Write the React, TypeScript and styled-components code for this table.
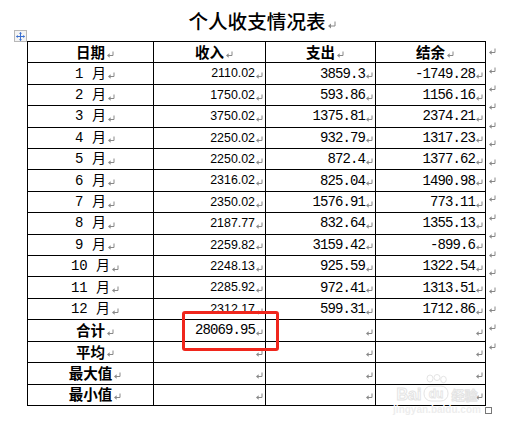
import React from "react";
import styled, { createGlobalStyle } from "styled-components";

const Global = createGlobalStyle`
  html, body { margin: 0; padding: 0; background: #fff; }
  body { font-family: "Noto Sans CJK SC", "Liberation Sans", sans-serif; color: #000; }
`;

const Page = styled.div`
  position: relative;
  width: 509px;
  height: 428px;
  background: #fff;
  overflow: hidden;
`;

const TitleBar = styled.div`
  display: flex;
  justify-content: center;
  padding: 9px 0 0 5px;
  height: 24px;
  margin-bottom: 8px;
`;

const Title = styled.h1`
  margin: 0;
  font-family: "Noto Sans CJK SC", sans-serif;
  font-weight: 500;
  font-size: 19.6px;
  line-height: 24px;
  display: flex;
  align-items: center;
`;

const TableRow = styled.div`
  display: flex;
  margin-left: 27px;
`;

const Grid = styled.div`
  display: grid;
  grid-template-columns: 126px 112px 110px 110px;
  grid-auto-rows: 21.41px;
  border-top: 1px solid #000;
  border-left: 1px solid #000;
`;

type Align = "center" | "right";

const Cell = styled.div<{ $align: Align }>`
  box-sizing: border-box;
  border-right: 1px solid #000;
  border-bottom: 1px solid #000;
  display: flex;
  align-items: center;
  justify-content: ${(p) => (p.$align === "center" ? "center" : "flex-end")};
  padding-right: ${(p) => (p.$align === "center" ? "0" : "2px")};
  overflow: hidden;
  white-space: nowrap;
`;

const HeadText = styled.span`
  font-family: "Noto Sans CJK SC", sans-serif;
  font-weight: 700;
  font-size: 14.5px;
  line-height: 1;
`;

const MonthText = styled.span`
  font-family: "Liberation Mono", "Noto Sans CJK SC", monospace;
  font-size: 14px;
  line-height: 1;
`;

const SansNum = styled.span`
  font-family: "Liberation Sans", sans-serif;
  font-size: 12.4px;
  line-height: 1;
`;

const MonoNum = styled.span`
  font-family: "Liberation Mono", monospace;
  font-size: 14px;
  letter-spacing: -0.9px;
  line-height: 1;
`;

const MarkSvg = styled.svg<{ $hang?: boolean }>`
  flex: none;
  width: 7px;
  height: 7px;
  margin-left: ${(p) => (p.$hang ? "2px" : "1px")};
  margin-right: ${(p) => (p.$hang ? "-9px" : "0")};
  margin-top: 4px;
`;

const Mark = ({ hang }: { hang?: boolean }) => (
  <MarkSvg $hang={hang} viewBox="0 0 7 7">
    <path d="M6 0.5 V4.5 H2" stroke="#888" strokeWidth="1" fill="none" />
    <polygon points="0,4.5 2.6,2.2 2.6,6.8" fill="#888" />
  </MarkSvg>
);

const EndCol = styled.div`
  display: flex;
  flex-direction: column;
  padding-top: 1px;
`;

const EndCell = styled.div`
  height: 21.41px;
  display: flex;
  align-items: center;
  padding-left: 2px;
  margin-top: -3px;
`;

const TitleMark = styled.svg`
  width: 8px;
  height: 8px;
  margin-left: 2px;
  margin-right: -10px;
  margin-top: 8px;
`;

const Handle = styled.div`
  position: absolute;
  left: 14px;
  top: 30px;
  width: 11px;
  height: 10px;
  border: 1px solid #b8b8b8;
  background: #f4f4f4;
  display: flex;
  align-items: center;
  justify-content: center;
`;

const Highlight = styled.div`
  position: absolute;
  left: 182px;
  top: 311px;
  width: 97px;
  height: 40px;
  box-sizing: border-box;
  border: 3px solid #f0261c;
  border-radius: 3px;
`;

const ResizeBox = styled.div`
  position: absolute;
  left: 485px;
  top: 407px;
  width: 5px;
  height: 5px;
  border: 1px solid #777;
  background: #fff;
`;

const Watermark = styled.div`
  position: absolute;
  left: 391px;
  top: 372px;
  width: 92px;
  display: flex;
  flex-direction: column;
  align-items: center;
  pointer-events: none;
`;

const WmLogo = styled.div`
  display: flex;
  align-items: flex-end;
  height: 30px;
`;

const WmWord = styled.span<{ $cjk?: boolean }>`
  font-family: ${(p) => (p.$cjk ? '"Noto Sans CJK SC", sans-serif' : '"Liberation Sans", sans-serif')};
  font-weight: 700;
  font-size: ${(p) => (p.$cjk ? "13px" : "16px")};
  line-height: 14px;
  color: #fff;
  -webkit-text-stroke: 1px #e4e4e4;
`;

const WmUrl = styled.span`
  margin-top: 3px;
  font-family: "Liberation Sans", sans-serif;
  font-weight: 700;
  font-size: 10px;
  line-height: 10px;
  color: #ededed;
`;

type Row = [string, string, string, string];

const rows: Row[] = [
  ["1 月", "2110.02", "3859.3", "-1749.28"],
  ["2 月", "1750.02", "593.86", "1156.16"],
  ["3 月", "3750.02", "1375.81", "2374.21"],
  ["4 月", "2250.02", "932.79", "1317.23"],
  ["5 月", "2250.02", "872.4", "1377.62"],
  ["6 月", "2316.02", "825.04", "1490.98"],
  ["7 月", "2350.02", "1576.91", "773.11"],
  ["8 月", "2187.77", "832.64", "1355.13"],
  ["9 月", "2259.82", "3159.42", "-899.6"],
  ["10 月", "2248.13", "925.59", "1322.54"],
  ["11 月", "2285.92", "972.41", "1313.51"],
  ["12 月", "2312.17", "599.31", "1712.86"],
];

const summary: [string, string][] = [
  ["合计", "28069.95"],
  ["平均", ""],
  ["最大值", ""],
  ["最小值", ""],
];

export default function App() {
  const totalRows = 1 + rows.length + summary.length;
  return (
    <Page>
      <Global />
      <TitleBar>
        <Title>
          个人收支情况表
          <TitleMark viewBox="0 0 8 8">
            <path d="M7 0.5 V5 H2.5" stroke="#888" strokeWidth="1" fill="none" />
            <polygon points="0,5 3,2.5 3,7.5" fill="#888" />
          </TitleMark>
        </Title>
      </TitleBar>
      <TableRow>
        <Grid>
          {["日期", "收入", "支出", "结余"].map((h) => (
            <Cell key={h} $align="center">
              <HeadText>{h}</HeadText>
              <Mark hang />
            </Cell>
          ))}
          {rows.map((r) => (
            <React.Fragment key={r[0]}>
              <Cell $align="center">
                <MonthText>{r[0]}</MonthText>
                <Mark hang />
              </Cell>
              <Cell $align="right">
                <SansNum>{r[1]}</SansNum>
                <Mark />
              </Cell>
              <Cell $align="right">
                <MonoNum>{r[2]}</MonoNum>
                <Mark />
              </Cell>
              <Cell $align="right">
                <MonoNum>{r[3]}</MonoNum>
                <Mark />
              </Cell>
            </React.Fragment>
          ))}
          {summary.map(([label, v]) => (
            <React.Fragment key={label}>
              <Cell $align="center">
                <HeadText>{label}</HeadText>
                <Mark hang />
              </Cell>
              <Cell $align="right">
                {v && <MonoNum>{v}</MonoNum>}
                <Mark />
              </Cell>
              <Cell $align="right">
                <Mark />
              </Cell>
              <Cell $align="right">
                <Mark />
              </Cell>
            </React.Fragment>
          ))}
        </Grid>
        <EndCol>
          {Array.from({ length: totalRows }).map((_, i) => (
            <EndCell key={i}>
              <Mark />
            </EndCell>
          ))}
        </EndCol>
      </TableRow>
      <Handle>
        <svg width="9" height="9" viewBox="0 0 9 9">
          <path d="M4.5 0.5 V8.5 M0.5 4.5 H8.5" stroke="#3a6fd0" strokeWidth="1" />
          <polygon points="4.5,0 3,1.8 6,1.8" fill="#3a6fd0" />
          <polygon points="4.5,9 3,7.2 6,7.2" fill="#3a6fd0" />
          <polygon points="0,4.5 1.8,3 1.8,6" fill="#3a6fd0" />
          <polygon points="9,4.5 7.2,3 7.2,6" fill="#3a6fd0" />
        </svg>
      </Handle>
      <Watermark>
        <WmLogo>
          <WmWord>Bai</WmWord>
          <svg width="30" height="28" viewBox="0 0 30 28">
            <g fill="#fff" stroke="#e4e4e4" strokeWidth="1">
              <ellipse cx="9" cy="4.5" rx="3" ry="3.5" />
              <ellipse cx="16" cy="3.5" rx="3" ry="3" />
              <ellipse cx="22.5" cy="5.5" rx="2.8" ry="3.2" />
              <rect x="3" y="12" width="24" height="15" rx="7" />
            </g>
            <text x="15" y="24" textAnchor="middle" fontFamily="Liberation Sans, sans-serif" fontWeight="700" fontSize="12" fill="#fff" stroke="#e4e4e4" strokeWidth="0.8">du</text>
          </svg>
          <WmWord $cjk>经验</WmWord>
        </WmLogo>
        <WmUrl>jingyan.baidu.com</WmUrl>
      </Watermark>
      <Highlight />
      <ResizeBox />
    </Page>
  );
}
